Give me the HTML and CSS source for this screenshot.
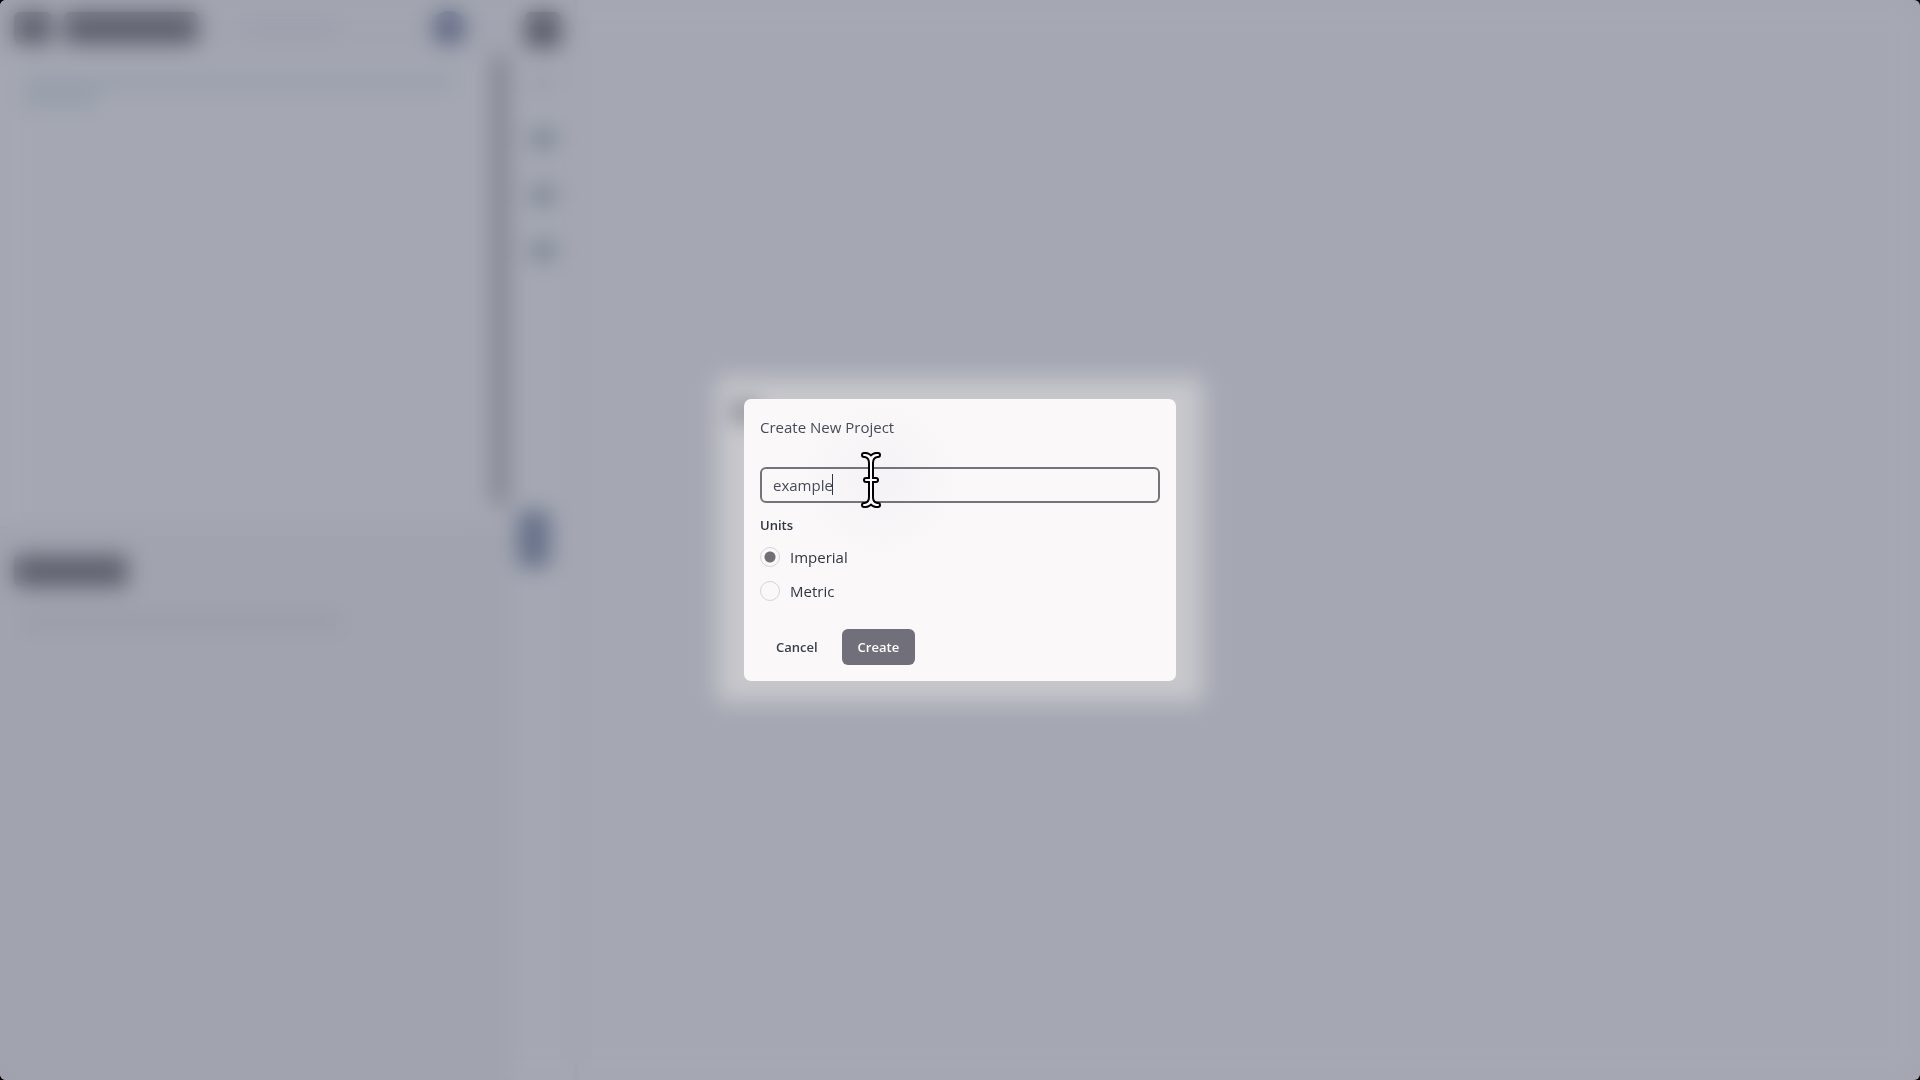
FILE: index.html
```
<!DOCTYPE html>
<html lang="en">

<head>
    <meta charset="utf-8">
    <meta name="viewport" content="width=device-width, initial-scale=1.0">
    <title>Create New Project</title>
    <link rel="stylesheet" href="styles.css">
</head>

<body>
    <div class="screen">
        <div class="app" aria-hidden="true">
            <aside class="sidebar">
                <section class="panel">
                    <div class="panel-head">
                        <span class="chip chip-small"></span>
                        <span class="chip chip-large"></span>
                        <span class="hint"></span>
                        <span class="avatar"></span>
                    </div>
                    <div class="panel-body">
                        <div class="lines">
                            <span class="line line-long"></span>
                            <span class="line line-short"></span>
                        </div>
                        <span class="scrollbar"></span>
                    </div>
                </section>
                <section class="panel panel-lower">
                    <span class="chip chip-medium"></span>
                    <span class="line line-medium"></span>
                </section>
            </aside>
            <div class="rail">
                <span class="tool tool-active"></span>
                <span class="tool tool-faint"></span>
                <span class="tool"></span>
                <span class="tool"></span>
                <span class="tool"></span>
                <span class="handle"></span>
            </div>
            <main class="workspace"></main>
        </div>
        <div class="layer">
            <div class="welcome">
                <span class="welcome-icon"></span>
            </div>
        </div>
        <div class="layer overlay">
            <form class="dialog" role="dialog" aria-labelledby="dialog-title">
                <h1 id="dialog-title">Create New Project</h1>
                <div class="field">
                    <input class="name" type="text" value="example" aria-label="Project name">
                    <span class="caret"></span>
                    <svg class="cursor" width="24" height="62" viewBox="0 0 24 62" fill="none" stroke-linecap="round" stroke-linejoin="round">
                        <path d="M5 6H7Q9 6 12 9Q15 6 17 6H19M5 56H7Q9 56 12 53Q15 56 17 56H19M6 6Q12 7 12 14V48Q12 55 6 56M18 6Q12 7 12 14V48Q12 55 18 56M7 31H17" stroke="#000" stroke-width="6" />
                        <path d="M5 6H7Q9 6 12 9Q15 6 17 6H19M5 56H7Q9 56 12 53Q15 56 17 56H19M6 6Q12 7 12 14V48Q12 55 6 56M18 6Q12 7 12 14V48Q12 55 18 56M7 31H17" stroke="#fff" stroke-width="2" />
                    </svg>
                </div>
                <fieldset>
                    <legend>Units</legend>
                    <label><input type="radio" name="units" value="imperial" checked>Imperial</label>
                    <label><input type="radio" name="units" value="metric">Metric</label>
                </fieldset>
                <div class="actions">
                    <button type="button">Cancel</button>
                    <button type="submit" class="primary">Create</button>
                </div>
            </form>
        </div>
    </div>
</body>

</html>
```
FILE: styles.css
```
* {
    box-sizing: border-box;
}

body {
    margin: 0;
    background: #000;
    color: #303642;
    font-family: "Open Sans", "Noto Sans", sans-serif;
    font-size: 15px;
}

/* app, dialog layers share one cell */
.screen {
    display: grid;
    grid-template-columns: 1fr;
    grid-template-rows: 1fr;
    min-height: 100vh;
    overflow: hidden;
    border-radius: 6px;
    background: #a5a8b3;
}

.app,
.layer {
    grid-area: 1 / 1;
}

.app {
    display: flex;
}

.sidebar {
    display: flex;
    flex-direction: column;
    width: 512px;
}

.panel {
    display: flex;
    flex-direction: column;
    flex: 1;
}

.panel-head {
    display: flex;
    align-items: center;
    height: 56px;
    padding: 0 46px 0 14px;
    gap: 12px;
    background: #a2a5b0;
}

.chip {
    height: 32px;
    border-radius: 6px;
    background: #5f626e;
}

.chip-small {
    width: 38px;
}

.chip-large {
    width: 134px;
}

.chip-medium {
    width: 114px;
}

.hint {
    width: 90px;
    height: 12px;
    margin-left: 36px;
    background: #9b9fab;
}

.avatar {
    width: 34px;
    height: 34px;
    margin-left: auto;
    border-radius: 50%;
    background: #616985;
}

.panel-body {
    display: flex;
    flex: 1;
    justify-content: space-between;
    padding: 0 4px 20px 22px;
}

.lines {
    display: flex;
    flex-direction: column;
    gap: 6px;
    padding-top: 20px;
}

.line {
    height: 12px;
    background: #939ca8;
}

.line-long {
    width: 432px;
}

.line-short {
    width: 76px;
}

.line-medium {
    width: 320px;
    margin-left: 8px;
    background: #989ba6;
}

.scrollbar {
    width: 16px;
    background: #7f808b;
}

.panel-lower {
    gap: 29px;
    padding: 30px 14px 0;
    background: #a1a4af;
}

.rail {
    display: flex;
    flex-direction: column;
    align-items: center;
    width: 66px;
    padding-top: 12px;
    border-right: 4px solid #9da0ab;
}

.tool {
    width: 24px;
    height: 20px;
    margin-top: 36px;
    background: #7b8592;
}

.tool-active {
    width: 36px;
    height: 36px;
    margin-top: 0;
    border-radius: 6px;
    background: #5c5f6b;
}

.tool-faint {
    margin-top: 25px;
    background: #9ca0ab;
}

.handle {
    align-self: flex-start;
    width: 32px;
    height: 56px;
    margin: 250px 0 0 6px;
    border-radius: 6px;
    background: #667089;
}

.workspace {
    flex: 1;
}

.layer {
    display: grid;
    place-items: center;
}

.welcome {
    width: 486px;
    height: 324px;
    padding: 24px 16px;
    border-radius: 6px;
    background: #c7c7cc;
}

.welcome-icon {
    display: block;
    width: 24px;
    height: 20px;
    background: #80828c;
}

.overlay {
    backdrop-filter: blur(11px);
}

.dialog {
    width: 432px;
    padding: 16px;
    border-radius: 7px;
    background: radial-gradient(circle at 136px 80px, #f4f2f4, #faf8f9 80px);
}

h1 {
    margin: 0;
    color: #454b58;
    font-size: 15px;
    font-weight: 400;
    line-height: 24px;
}

.field {
    position: relative;
    margin-top: 28px;
}

.name {
    display: block;
    width: 100%;
    height: 36px;
    padding: 0 11px;
    border: 2px solid #757379;
    border-radius: 6px;
    outline: none;
    background: transparent;
    color: #454b58;
    font: inherit;
}

/* text caret and I-beam pointer, drawn over the field */
.caret {
    position: absolute;
    top: 7px;
    left: 72px;
    width: 1px;
    height: 21px;
    background: #303642;
}

.cursor {
    position: absolute;
    top: -18px;
    left: 99px;
}

fieldset {
    display: flex;
    flex-direction: column;
    gap: 14px;
    margin: 12px 0 0;
    padding: 0;
    border: 0;
}

legend {
    margin-bottom: 12px;
    padding: 0;
    font-size: 13px;
    font-weight: 600;
    line-height: 20px;
}

label {
    display: flex;
    align-items: center;
    gap: 10px;
    line-height: 20px;
}

input[type="radio"] {
    appearance: none;
    width: 20px;
    height: 20px;
    margin: 0;
    border: 1px solid #d6d4d9;
    border-radius: 50%;
}

input[type="radio"]:checked {
    background: radial-gradient(circle, #706f75 5px, transparent 6px);
}

.actions {
    display: flex;
    gap: 8px;
    margin-top: 28px;
}

button {
    height: 36px;
    padding: 0 16px;
    border: 0;
    border-radius: 6px;
    background: transparent;
    color: #3a404c;
    font: 600 13px "Open Sans", "Noto Sans", sans-serif;
    cursor: pointer;
}

.primary {
    background: #716f7a;
    color: #fff;
}
```
